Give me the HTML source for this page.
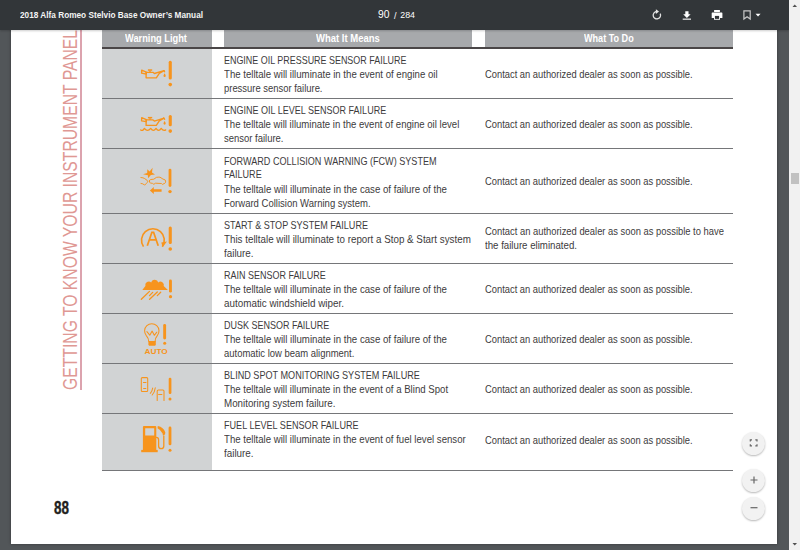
<!DOCTYPE html>
<html><head><meta charset="utf-8">
<style>
*{margin:0;padding:0;box-sizing:border-box}
html,body{width:800px;height:550px;overflow:hidden;background:#525659;font-family:"Liberation Sans",sans-serif}
.abs{position:absolute}
#page{position:absolute;left:11px;top:0;width:766px;height:544px;background:#fff;box-shadow:0 0 3px rgba(0,0,0,.35)}
#bar{position:absolute;left:0;top:0;width:789px;height:30px;background:#323639;box-shadow:0 1px 2px rgba(0,0,0,.2);z-index:5}
#sb{position:absolute;left:789px;top:0;width:11px;height:550px;background:#f1f1f1;z-index:6}
.t{position:absolute;white-space:nowrap;color:#3d3b3c;font-size:10.8px;line-height:14px;transform-origin:0 0}
.hd{position:absolute;top:26px;height:21px;background:#a7a9ac}
.ht{position:absolute;white-space:nowrap;color:#fff;font-weight:bold;font-size:10.5px;line-height:14px;transform-origin:0 0;top:30.5px}
.ln{position:absolute;height:1px;background:#757679}
.g{position:absolute;left:102px;width:110px;background:#d1d3d4}
.fab{position:absolute;width:23px;height:23px;border-radius:50%;background:#f2f2f2;box-shadow:0 1px 2px rgba(0,0,0,.28);z-index:4}
.fab svg{position:absolute;left:0;top:0}
</style></head><body>
<div id="page"></div>
<!-- vertical title -->
<div class="abs" style="left:80.3px;top:30px;width:1.5px;height:360px;background:#dca3ae"></div>
<div class="abs" style="left:0;top:0;width:0;height:0">
 <div style="position:absolute;left:60px;top:389.5px;white-space:nowrap;font-size:20.3px;line-height:20px;color:#df9894;transform-origin:0 0;transform:rotate(-90deg) scaleX(0.775) translateY(0)">GETTING TO KNOW YOUR INSTRUMENT PANEL</div>
</div>
<!-- table header -->
<div class="hd" style="left:102px;width:110px"></div>
<div class="hd" style="left:224px;width:248px"></div>
<div class="hd" style="left:485px;width:248px"></div>
<div class="ht" style="left:125px;transform:scaleX(0.882)">Warning Light</div>
<div class="ht" style="left:315.6px;transform:scaleX(0.904)">What It Means</div>
<div class="ht" style="left:583.7px;transform:scaleX(0.864)">What To Do</div>
<div class="abs" style="left:102px;top:47px;width:631px;height:2px;background:#4a4647"></div>
<div class="g" style="top:49px;height:421px"></div>
<div class="ln" style="left:102px;top:98px;width:631px"></div>
<div class="ln" style="left:102px;top:148px;width:631px"></div>
<div class="ln" style="left:102px;top:213px;width:631px"></div>
<div class="ln" style="left:102px;top:263px;width:631px"></div>
<div class="ln" style="left:102px;top:313px;width:631px"></div>
<div class="ln" style="left:102px;top:363px;width:631px"></div>
<div class="ln" style="left:102px;top:413px;width:631px"></div>
<div class="ln" style="left:102px;top:470px;width:631px"></div>
<div class="t" style="left:223.7px;top:53.1px;transform:scaleX(0.828)">ENGINE OIL PRESSURE SENSOR FAILURE</div>
<div class="t" style="left:223.7px;top:67.0px;transform:scaleX(0.892)">The telltale will illuminate in the event of engine oil</div>
<div class="t" style="left:223.7px;top:81.1px;transform:scaleX(0.873)">pressure sensor failure.</div>
<div class="t" style="left:484.7px;top:67.2px;transform:scaleX(0.867)">Contact an authorized dealer as soon as possible.</div>
<div class="t" style="left:223.7px;top:102.9px;transform:scaleX(0.835)">ENGINE OIL LEVEL SENSOR FAILURE</div>
<div class="t" style="left:223.7px;top:117.2px;transform:scaleX(0.889)">The telltale will illuminate in the event of engine oil level</div>
<div class="t" style="left:223.7px;top:131.2px;transform:scaleX(0.877)">sensor failure.</div>
<div class="t" style="left:484.7px;top:117.2px;transform:scaleX(0.867)">Contact an authorized dealer as soon as possible.</div>
<div class="t" style="left:223.7px;top:153.5px;transform:scaleX(0.841)">FORWARD COLLISION WARNING (FCW) SYSTEM</div>
<div class="t" style="left:223.7px;top:167.2px;transform:scaleX(0.837)">FAILURE</div>
<div class="t" style="left:223.7px;top:181.8px;transform:scaleX(0.895)">The telltale will illuminate in the case of failure of the</div>
<div class="t" style="left:223.7px;top:195.8px;transform:scaleX(0.881)">Forward Collision Warning system.</div>
<div class="t" style="left:484.7px;top:174.4px;transform:scaleX(0.867)">Contact an authorized dealer as soon as possible.</div>
<div class="t" style="left:223.7px;top:217.9px;transform:scaleX(0.838)">START &amp; STOP SYSTEM FAILURE</div>
<div class="t" style="left:223.7px;top:232.2px;transform:scaleX(0.908)">This telltale will illuminate to report a Stop &amp; Start system</div>
<div class="t" style="left:223.7px;top:246.2px;transform:scaleX(0.913)">failure.</div>
<div class="t" style="left:484.7px;top:224.4px;transform:scaleX(0.869)">Contact an authorized dealer as soon as possible to have</div>
<div class="t" style="left:484.7px;top:238.0px;transform:scaleX(0.896)">the failure eliminated.</div>
<div class="t" style="left:223.7px;top:267.9px;transform:scaleX(0.832)">RAIN SENSOR FAILURE</div>
<div class="t" style="left:223.7px;top:282.2px;transform:scaleX(0.895)">The telltale will illuminate in the case of failure of the</div>
<div class="t" style="left:223.7px;top:296.2px;transform:scaleX(0.913)">automatic windshield wiper.</div>
<div class="t" style="left:484.7px;top:282.4px;transform:scaleX(0.867)">Contact an authorized dealer as soon as possible.</div>
<div class="t" style="left:223.7px;top:317.9px;transform:scaleX(0.832)">DUSK SENSOR FAILURE</div>
<div class="t" style="left:223.7px;top:332.2px;transform:scaleX(0.895)">The telltale will illuminate in the case of failure of the</div>
<div class="t" style="left:223.7px;top:346.2px;transform:scaleX(0.876)">automatic low beam alignment.</div>
<div class="t" style="left:484.7px;top:332.1px;transform:scaleX(0.867)">Contact an authorized dealer as soon as possible.</div>
<div class="t" style="left:223.7px;top:367.9px;transform:scaleX(0.843)">BLIND SPOT MONITORING SYSTEM FAILURE</div>
<div class="t" style="left:223.7px;top:382.2px;transform:scaleX(0.891)">The telltale will illuminate in the event of a Blind Spot</div>
<div class="t" style="left:223.7px;top:396.2px;transform:scaleX(0.906)">Monitoring system failure.</div>
<div class="t" style="left:484.7px;top:382.1px;transform:scaleX(0.867)">Contact an authorized dealer as soon as possible.</div>
<div class="t" style="left:223.7px;top:417.9px;transform:scaleX(0.841)">FUEL LEVEL SENSOR FAILURE</div>
<div class="t" style="left:223.7px;top:432.2px;transform:scaleX(0.891)">The telltale will illuminate in the event of fuel level sensor</div>
<div class="t" style="left:223.7px;top:446.2px;transform:scaleX(0.913)">failure.</div>
<div class="t" style="left:484.7px;top:432.9px;transform:scaleX(0.867)">Contact an authorized dealer as soon as possible.</div>
<!-- icons -->
<svg class="abs" style="left:0;top:0" width="800" height="550" viewBox="0 0 800 550">
<g fill="#f7941d" stroke="none">
 <!-- exclamation marks -->
 <rect x="168.7" y="60.7" width="3.1" height="18.8" rx="1.5"/><circle cx="170.25" cy="84.6" r="1.8"/>
 <rect x="168.7" y="114.9" width="3.1" height="11.4" rx="1.5"/><circle cx="170.25" cy="131.1" r="1.8"/>
 <rect x="168.6" y="168.7" width="2.8" height="18.2" rx="1.4"/><circle cx="170" cy="191.6" r="1.7"/>
 <rect x="168.7" y="226.4" width="3.1" height="17.5" rx="1.5"/><circle cx="170.25" cy="249" r="1.8"/>
 <rect x="169" y="279.5" width="2.9" height="13.1" rx="1.4"/><circle cx="170.5" cy="296.7" r="1.6"/>
 <rect x="163.2" y="324" width="2.9" height="15.5" rx="1.4"/><circle cx="164.7" cy="343.2" r="1.5"/>
 <rect x="168.7" y="377.7" width="2.7" height="16.3" rx="1.3"/><circle cx="170" cy="399" r="1.5"/>
 <rect x="168.6" y="426.5" width="2.8" height="18.8" rx="1.4"/><circle cx="170" cy="450.2" r="1.5"/>
</g>
</svg>
<svg class="abs" style="left:0;top:0" width="800" height="550" viewBox="0 0 800 550">
<g fill="none" stroke="#f7941d" stroke-linejoin="round" stroke-linecap="round">
 <!-- 1 oil can -->
 <g stroke-width="1.35">
  <path d="M141.7 70.1L146.3 72.1V74.1L141.6 73.2Z"/>
  <path d="M146.1 72.3H153L154.4 73.5L164 70.6L159.3 73.3L156.3 77.8H146.1Z"/><path d="M164 70.6L164.6 71.7"/>
 </g>
 <rect x="147.9" y="69.3" width="4.3" height="1.5" fill="#f7941d" stroke="none"/>
 <rect x="149.3" y="70.5" width="1.4" height="1.8" fill="#f7941d" stroke="none"/>
 <path d="M164.6 73.3Q166 75.4 165.7 76A1.05 1.05 0 0 1 163.5 76Q163.3 75.4 164.6 73.3Z" fill="#f7941d" stroke="none"/>
 <!-- 2 oil level -->
 <g transform="translate(0 47.6)">
 <g stroke-width="1.35">
  <path d="M141.7 70.1L146.3 72.1V74.1L141.6 73.2Z"/>
  <path d="M146.1 72.3H153L154.4 73.5L164 70.6L159.3 73.3L156.3 77.8H146.1Z"/><path d="M164 70.6L164.6 71.7"/>
 </g>
 <rect x="147.9" y="69.3" width="4.3" height="1.5" fill="#f7941d" stroke="none"/>
 <rect x="149.3" y="70.5" width="1.4" height="1.8" fill="#f7941d" stroke="none"/>
 <path d="M164.6 73.3Q166 75.4 165.7 76A1.05 1.05 0 0 1 163.5 76Q163.3 75.4 164.6 73.3Z" fill="#f7941d" stroke="none"/>
 </g>
 <path stroke-width="1.3" d="M140.7 129.9Q142.6 131.4 144.4 128.4Q147.5 132.4 150.7 128.4Q153.4 132.4 156 128.4Q158.6 132.4 161.2 128.4Q163.4 131.4 165.7 129.9"/>
 <!-- 3 FCW -->
 <path fill="#f7941d" stroke="none" d="M147.3 169.3L149.6 171.6L152.6 167.8L152 172.6L155 174.6L150.9 175L148 178.2L147.9 175.3L143 174.3L147.2 173Z"/>
 <g stroke-width="0.95">
  <path d="M140.9 177.5Q143.3 177.6 144.7 178.6L147.3 180.5Q148 181.6 147.5 182.3L146.3 183.3Q145.4 185.3 144.3 184.9Q143.2 183.6 141 183.4"/>
  <path d="M149.4 180.9Q149.6 179.7 150.6 179.5L153.8 179.2L156.4 177.4Q158 177 160 177.2L163 179.1L165.1 179.9Q165.9 181 165.5 182.5Q165 183.5 164 183.6Q162.5 185.3 161.4 183.5L155.6 183.2Q153.6 185.3 152.4 183.3L150.4 183.1Q149.3 182.5 149.4 180.9Z"/>
 </g>
 <path fill="#f7941d" stroke="none" d="M149.9 190.6L153.8 187.1V189.3H161.6V191.8H153.8V194Z"/>
 <!-- 4 Start & Stop -->
 <path stroke-width="1.65" stroke-linecap="butt" d="M143.5 246.6A11.4 11.4 0 1 1 162.3 246.6"/>
 <path fill="#f7941d" stroke="none" d="M161.3 242.4L166.9 241.4L162.7 247.2Z"/>
 <path stroke-width="1.75" stroke-linejoin="miter" stroke-linecap="butt" d="M147.3 245.8L151.9 232.3H153.6L158.2 245.8M149.2 239.8H156.3"/>
 <!-- 5 rain -->
 <path fill="#f7941d" stroke="none" d="M142.3 289.9L145.4 286.1A3.5 3.5 0 0 1 151.2 282.6A3.65 3.65 0 0 1 158.3 282.4A3.4 3.4 0 0 1 163.7 286.1L167.9 289.9Z"/>
 <g stroke-width="1.3">
  <path d="M141.3 299.3L149.5 291.4M149.5 295.6L152.7 292.4M149.6 299.3L157.3 292M157.3 295.6L160.7 292.2"/>
 </g>
 <!-- 6 dusk -->
 <g stroke-width="1.05">
  <path d="M148.7 341.3Q148.6 338.2 146.3 335.6A7.2 7.2 0 1 1 157.3 335.6Q155.1 338.2 155.1 341.3"/>
  <path d="M146.9 331.6L149.8 335.2L152.1 331.1L154.3 335.3L156.8 332.2"/>
 </g>
 <path fill="#f7941d" stroke="none" d="M148.4 341H155.8V344.5L155.2 345.7H149L148.4 344.5Z"/>
 <!-- 7 blind spot -->
 <g stroke-width="1.05">
  <rect x="141.3" y="377.6" width="6.4" height="13.8" rx="1"/>
  <path d="M143.4 382.4H146M143.6 388.5H145.8"/>
  <path d="M150.3 393.3Q152.3 391 152.7 388M152.2 395Q154.8 392 155.3 387.8"/>
  <path d="M157.2 400.4V391.2Q157.2 390 158.4 390H162.9Q164 390 164 391.2V400.4M158.6 394.5H161.9"/>
 </g>
 <!-- 8 fuel -->
 <path fill="#f7941d" stroke="none" fill-rule="evenodd" d="M142.9 427Q142.9 425.9 144 425.9H155.2Q156.3 425.9 156.3 427V450.1H142.9Z M145.2 428.2V435.5H154.2V428.2Z"/>
 <rect x="141.2" y="449.9" width="16.5" height="2.3" fill="#f7941d" stroke="none"/>
 <path stroke-width="1.3" d="M156.3 437.4Q158.6 437.4 158.6 440V446Q158.6 448.7 161.2 448.7Q163.8 448.7 163.8 446V436"/>
 <path fill="#f7941d" stroke="none" d="M157.8 426.1Q163.6 427.3 165.3 432.6L165 434.6L162.9 435.6L162.6 433.4Q161.2 430.2 157.5 428.3Z"/>
</g>
<text x="144.5" y="354" fill="#f7941d" font-family="Liberation Sans" font-weight="bold" font-size="7.7" textLength="23.3" lengthAdjust="spacingAndGlyphs">AUTO</text>
</svg>

<!-- page number -->
<div class="abs" style="left:53.5px;top:498px;font-size:18.4px;font-weight:bold;color:#231f20;-webkit-text-stroke:0.35px #231f20;line-height:20px;transform-origin:0 0;transform:scaleX(0.73)">88</div>
<!-- fabs -->
<div class="fab" style="left:742px;top:431.5px"><svg width="23" height="23"><g fill="none" stroke="#666" stroke-width="1.2"><path d="M8.3 9.6V7.9H10M13.3 7.9H15V9.6M15 12.2V13.9H13.3M10 13.9H8.3V12.2"/></g></svg></div>
<div class="fab" style="left:742px;top:469px"><svg width="23" height="23"><g fill="none" stroke="#666" stroke-width="1.2"><path d="M12 7.5V14.5M8.5 11H15.5"/></g></svg></div>
<div class="fab" style="left:742px;top:497px"><svg width="23" height="23"><g fill="none" stroke="#666" stroke-width="1.2"><path d="M8.5 10.7H15.5"/></g></svg></div>

<div id="bar">
 <div class="abs" style="left:19.5px;top:8px;font-size:9.5px;font-weight:bold;line-height:14px;color:#f4f4f4;white-space:nowrap;transform-origin:0 0;transform:scaleX(0.868)">2018 Alfa Romeo Stelvio Base Owner’s Manual</div>
 <div class="abs" style="left:378px;top:7.5px;font-size:10.3px;line-height:14px;color:#fff;white-space:nowrap">90</div>
 <div class="abs" style="left:394px;top:8.6px;font-size:9px;line-height:14px;color:#fff;white-space:nowrap">/</div>
 <div class="abs" style="left:400.3px;top:7.6px;font-size:8.8px;line-height:14px;color:#fff;white-space:nowrap">284</div>
 <svg class="abs" style="left:0;top:0" width="789" height="30">
  <!-- rotate -->
  <g fill="none" stroke="#e0e0e0" stroke-width="1.3"><path d="M656.8 11.5A3.7 3.7 0 1 0 660.2 13.6"/></g>
  <path d="M655.9 9.2L659 11.6L655.9 14Z" fill="#e8e8e8"/>
  <!-- download -->
  <path d="M685.3 11.2H688.5V14.3H690.6L686.9 18L683.2 14.3H685.3Z" fill="#fff"/>
  <rect x="682.7" y="18.6" width="8.3" height="1.1" fill="#fff"/>
  <!-- print -->
  <path d="M714.1 9.9H719.9V12.1H714.1Z M712.3 12.6H721.8A0.6 0.6 0 0 1 722.4 13.2V17.9H720V19.8H714V17.9H711.7V13.2A0.6 0.6 0 0 1 712.3 12.6Z" fill="#fff"/>
  <rect x="714.9" y="15.9" width="4.2" height="3" fill="#323639"/>
  <!-- bookmark -->
  <path d="M743.9 10.9H750.2V19.1L747.05 16.7L743.9 19.1Z" fill="none" stroke="#c8c8c8" stroke-width="1.2"/>
  <path d="M755.5 13.7H760.6L758.05 16.6Z" fill="#fff"/>
 </svg>
</div>
<div id="sb">
 <svg class="abs" style="left:0;top:0" width="11" height="550">
  <path d="M3.5 7H8L5.75 4.6Z" fill="#505050"/>
  <rect x="2" y="173" width="8" height="11" fill="#c1c1c1"/>
  <path d="M3.5 543H8L5.75 545.4Z" fill="#505050"/>
 </svg>
</div>
</body></html>
